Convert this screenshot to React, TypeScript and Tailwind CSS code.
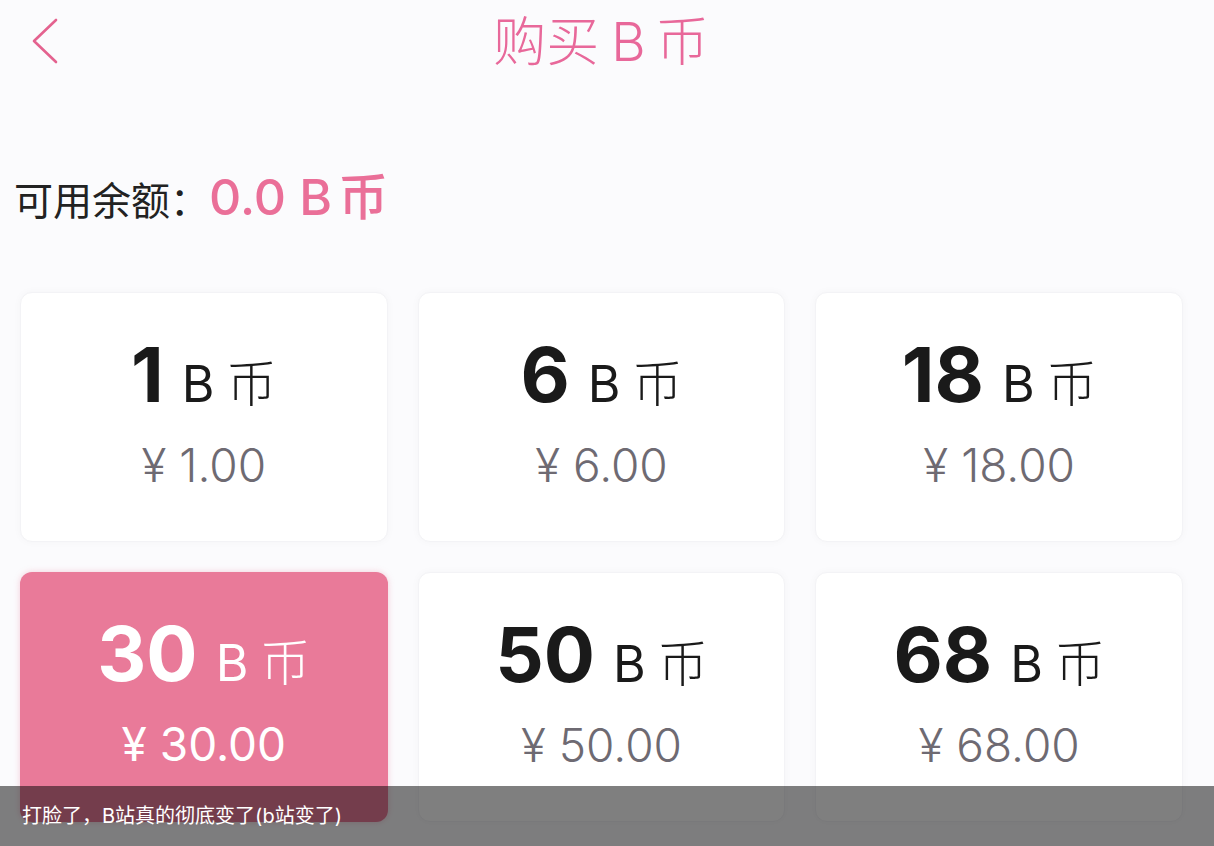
import React from "react"

const packs = [
  { coins: "1", price: "1.00" },
  { coins: "6", price: "6.00" },
  { coins: "18", price: "18.00" },
  { coins: "30", price: "30.00", active: true },
  { coins: "50", price: "50.00" },
  { coins: "68", price: "68.00" },
]

const cjk = "font-['Inter','Noto_Sans_CJK_SC',sans-serif]"

export default function App() {
  return (
    <div className={`relative h-[846px] w-[1214px] overflow-hidden bg-[#fbfbfd] ${cjk}`}>
      {/* Header */}
      <div className="relative flex h-[84px] items-center justify-center pr-[12px]">
        <svg className="absolute left-[30px] top-[18px]" width="30" height="46" viewBox="0 0 30 46" fill="none">
          <path d="M26 2 L4 23 L26 44" stroke="#e4628f" strokeWidth="2.6" strokeLinecap="round" strokeLinejoin="round" />
        </svg>
        <h1 className="flex items-baseline text-[53px] font-light leading-none text-[#e8689a]">
          <span>购买</span>
          <span className="ml-[12px]">B</span>
          <span className="ml-[10px]">币</span>
        </h1>
      </div>

      {/* Balance */}
      <div className="mt-[76px] flex items-baseline pl-[14px]">
        <span className="text-[39px] font-normal text-[#222]">可用余额：</span>
        <span className="text-[50px] font-medium text-[#ea6f98]">
          0.0 B<span className="ml-[6px]">币</span>
        </span>
      </div>

      {/* Packs */}
      <div className="mt-[57px] grid grid-cols-3 gap-x-[30px] gap-y-[30px] pl-[20px] pr-[31px]">
        {packs.map((p) => (
          <div
            key={p.coins}
            className={`flex h-[250px] flex-col items-center rounded-[12px] pt-[43px] ${
              p.active
                ? "bg-[#e97a99] text-white shadow-[0_0_6px_rgba(233,122,153,0.35)]"
                : "border border-[#f3f3f6] bg-white shadow-[0_0_8px_rgba(0,0,0,0.03)]"
            }`}
          >
            <div className="flex items-baseline">
              <span className={`text-[76px] font-bold leading-none ${p.active ? "text-white" : "text-[#1a1a1a]"}`}>
                {p.coins}
              </span>
              <span className={`ml-[18px] text-[50px] font-normal leading-none ${p.active ? "text-white" : "text-[#1a1a1a]"}`}>
                B<span className="ml-[12px] font-light">币</span>
              </span>
            </div>
            <div
              className={`mt-[30px] text-[46px] leading-none ${
                p.active ? "font-normal text-white" : "font-light text-[#6e6a72]"
              }`}
            >
              ¥ {p.price}
            </div>
          </div>
        ))}
      </div>

      {/* Caption overlay */}
      <div className="absolute bottom-0 left-0 right-0 flex h-[60px] items-center bg-black/50 pl-[22px]">
        <span className="text-[20px] text-white">打脸了，B站真的彻底变了(b站变了)</span>
      </div>
    </div>
  )
}
